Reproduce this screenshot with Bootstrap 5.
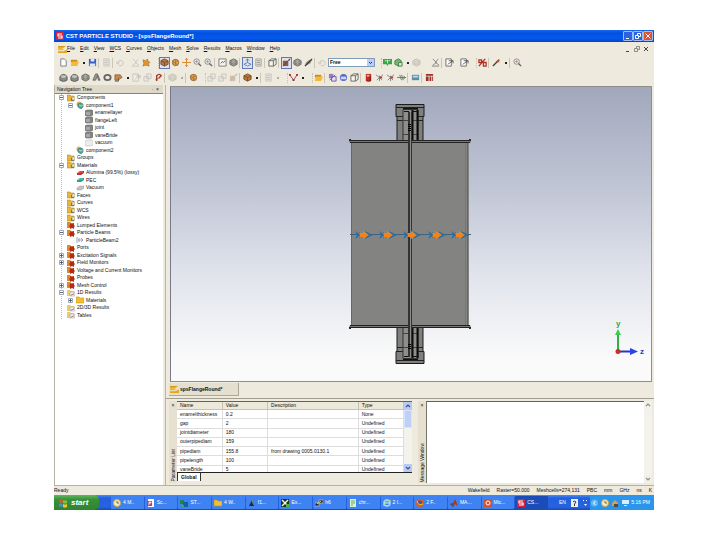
<!DOCTYPE html>
<html lang="en">
<head>
<meta charset="utf-8">
<meta name="viewport" content="width=device-width, initial-scale=1">
<title>CST PARTICLE STUDIO - [spsFlangeRound*]</title>
<link href="https://cdn.jsdelivr.net/npm/bootstrap@5.3.0/dist/css/bootstrap.min.css" rel="stylesheet">
<style>
:root{--face:#eeeadd;--edge:#aca899}
body{background:#fff;font-family:"Liberation Sans",Arial,sans-serif;font-size:5px;line-height:7px;color:#111;min-height:100vh;padding:30px 66px 30px 54px}
button{font:inherit;color:inherit;background:none;border:0;padding:0;line-height:7px}
svg{display:block;flex:none}
.app{background:var(--face)}
.titlebar{background:linear-gradient(#1668f0,#0450de 25%,#0558ee 70%,#0345c4);height:12px;color:#fff;font-size:6px;font-weight:700;padding:0 1px 0 2px}
.win-btn{width:10px;height:10px;border:1px solid #9dbdf8;border-radius:1px;background:#2a62e0}
.win-btn.quit{background:#d9502f}
.menubar{height:13px;padding:0 3px 0 4px}
.menubar a{color:#111;text-decoration:none}
.menubar a::first-letter{text-decoration:underline}
.menu-links{gap:5px}
.mdi button{width:9px}
.tools{height:15px;padding-left:4px}
.tools .tool{width:11px;height:12px;display:flex;align-items:center;justify-content:center;border:1px solid transparent;flex:none}
.tools .on{background:#dfe3ef;border-color:#6078b4}
.dim{opacity:.3}
.sep{width:3px;height:10px;border-left:1px solid #cbc6b4;margin:0;flex:none}
.grip{width:7px;height:10px;flex:none;border-right:1px dotted #c4bfae}
.space{width:4px;flex:none}
.drop{width:7px;flex:none;height:12px;display:flex;align-items:center;justify-content:center}
.drop::after{content:"";width:2px;height:2px;background:#222}
.render{width:47px;height:9px;flex:none;border:1px solid #7f9db9;padding:0 1px;font-size:5px;line-height:7px;font-weight:700;color:#111;background:#fff url("data:image/svg+xml,%3Csvg xmlns='http://www.w3.org/2000/svg' viewBox='0 0 7 7'%3E%3Crect width='7' height='7' fill='%23b9cdf8'/%3E%3Cpath d='M2 3l1.500 1.500L5 3' fill='none' stroke='%23234' /%3E%3C/svg%3E") right center/7px 7px no-repeat;appearance:none;border-radius:0}
.side{width:112px;border-left:1px solid #b8b4a4;border-right:1px solid #b8b4a4;padding-right:2px}
.side-head{height:8px;padding:0 4px 0 2px;background:#ded9c8}
.tree-box{background:#fff;border-top:1px solid #888474}
.tree{list-style:none;margin:0;padding:0 0 0 3px;height:225px;background:repeating-linear-gradient(#bbb 0 1px,#fff 1px 2px) 6px 0/1px 100% no-repeat}
.tree li{flex:1 1 0;min-height:0;gap:2px;white-space:nowrap}
.tree .lv1{padding-left:9px}.tree .lv2{padding-left:18px}
.knob{width:7px;height:7px;flex:none;display:flex;align-items:center;justify-content:center}
.stage{background:linear-gradient(#a2a8bc,#c1c6d6 35%,#dfe2eb 62%,#fafafa 92%);border:1px solid #8f8e8a;border-left-color:#77798a;margin:1px 2px 0 4px}
.axes{position:absolute;right:0;bottom:22px}
.file-tabs{height:16px;padding:1px 0 2px 3px}
.file-tab{height:13px;width:70px;padding:0 1px;gap:1px;font-weight:700;background:#e4dfce;border-right:1px solid var(--edge);border-bottom:1px solid var(--edge)}
.docks{height:87px;border-top:1px solid #a39f8f;padding:2px 2px 2px 3px}
.dock-strip{width:8px;padding:1px 0;flex:none;background:#e5e0d0}
.turned{writing-mode:vertical-rl;transform:rotate(180deg);white-space:nowrap;line-height:8px}
.params{width:243px;flex:none}
.message-dock{padding-left:6px}
.clip{height:72px;overflow:hidden;border-top:1px solid #666258;border-bottom:1px solid #222;background:#fff}
.ptable{width:100%;height:73px;table-layout:fixed;border-collapse:collapse;margin:0}
.ptable th,.ptable td{padding:0 0 0 3px;line-height:7px;font-weight:400;border-right:1px solid #ddd;border-bottom:1px solid #ddd;white-space:nowrap;overflow:hidden}
.ptable th{background:#ece8da;border-color:#c6c1b0}
.sbar{width:8px;flex:none;background:#f3f2ec}
.sbar i{display:block;width:8px;background:#bfd0f8;border:1px solid #d9e3fb}
.sbar svg{background:#b7caf7}
.sbar.off svg{background:#f1efe6;opacity:.6}
.sheet{padding:0 3px;font-weight:700;background:#fff;border-left:1px solid #333;border-right:1px solid #333;height:8px}
.messages{resize:none;border:0;border-top:1px solid #666258;border-left:1px solid #77746a;background:#fff;min-width:0;border-radius:0}
.status{height:10px;border-top:1px solid #b5b1a1;padding-right:2px}
.status .cells{gap:7px}
.taskbar{height:15px;background:linear-gradient(#4b8cf6,#2460dd 20%,#2663e2 80%,#1a48b4);color:#fff}
.start{width:45px;background:linear-gradient(#63b663,#379238 30%,#2e8530);border-radius:0 5px 5px 0;color:#fff;font-size:8px;font-style:italic;font-weight:700;gap:3px;padding-left:4px;margin-right:12px;flex:none}
.task{flex:1 1 0;min-width:0;gap:2px;padding-left:2px;margin:1px 1px 1px 0;background:#3f83f3;border-radius:1px;white-space:nowrap;overflow:hidden;color:#fff}
.task.current{background:#1c4cb8}
.lang{width:41px;padding:0 3px 0 10px;flex:none}
.tray{width:64px;background:#2a95ea;padding:0 4px 0 1px;flex:none}
</style>
<script src="https://cdn.jsdelivr.net/npm/bootstrap@5.3.0/dist/js/bootstrap.bundle.min.js"></script>
</head>
<body class="d-flex flex-column">
<svg width="0" height="0" class="position-absolute" aria-hidden="true">
<defs>
<symbol id="new" viewBox="0 0 10 10"><path d="M2 1h4l2 2v6H2z" fill="#fff" stroke="#777"/></symbol>
<symbol id="open" viewBox="0 0 10 10"><path d="M1 2h7v3H1z" fill="#c98c16"/><path d="M1 9l1-5h8L8 9z" fill="#f2ba38"/></symbol>
<symbol id="save" viewBox="0 0 10 10"><path d="M1 1h8v8H1z" fill="#3c5fc4"/><path d="M3 1h4v3H3zM2 6h6v3H2z" fill="#dfe7fb"/></symbol>
<symbol id="doc" viewBox="0 0 10 10"><path d="M2 1h6v8H2z" fill="#ddd" stroke="#777"/><path d="M3 3h4M3 5h4M3 7h4" stroke="#666"/></symbol>
<symbol id="copy" viewBox="0 0 10 10"><path d="M1 4h5v5H1zM4 1h5v5H4z" fill="#ddd" stroke="#777"/></symbol>
<symbol id="undo" viewBox="0 0 10 10"><path d="M2 5a3 3 0 1 1 1 3M0 4l2 3 2-3" fill="none" stroke="#666"/></symbol>
<symbol id="gearo" viewBox="0 0 10 10"><path d="M1 2l3 1 2-2 1 3 2 1-2 1 1 3-4-1-3 1 1-3z" fill="#e0952d" stroke="#8c6a3a" stroke-width=".6"/></symbol>
<symbol id="cube" viewBox="0 0 10 10"><path d="M1 3l4-2 4 2v4L5 9 1 7z" fill="#b8763c" stroke="#7a4a24"/><path d="M1 3l4 2 4-2M5 5v4" fill="none" stroke="#6b4020" stroke-width=".7"/></symbol>
<symbol id="orbit" viewBox="0 0 10 10"><circle cx="5" cy="5" r="3.500" fill="#e3a34a" stroke="#8b6338"/><path d="M1 3l7 5M5 2v6M2 6l6-3" stroke="#a5743c" stroke-width=".8"/></symbol>
<symbol id="pan" viewBox="0 0 10 10"><path d="M5 0v10M0 5h10M3.500 2L5 .5 6.500 2M3.500 8L5 9.500 6.500 8" fill="none" stroke="#d8842a"/></symbol>
<symbol id="zoom" viewBox="0 0 10 10"><circle cx="4" cy="4" r="3" fill="#eee" stroke="#888"/><path d="M2.500 4h3M4 2.500v3" stroke="#a77" stroke-width=".8"/><path d="M6 6l3 3" stroke="#666" stroke-width="1.500"/></symbol>
<symbol id="frame" viewBox="0 0 10 10"><path d="M1 1h8v8H1z" fill="#f4f4f0" stroke="#777"/><path d="M3 6l2-2 1 1 2-2" fill="none" stroke="#555"/></symbol>
<symbol id="mesh" viewBox="0 0 10 10"><path d="M1 3l4-2 4 2v4L5 9 1 7z" fill="#a9a69a" stroke="#666"/><path d="M1 5l4 2 4-2M3 2v6M7 2v6" fill="none" stroke="#666" stroke-width=".5"/></symbol>
<symbol id="axis" viewBox="0 0 10 10"><path d="M5 1v4L1 7l4 2 4-2-4-2M3 3l2-2 2 2" fill="none" stroke="#4a7aa4" stroke-width=".9"/></symbol>
<symbol id="wire" viewBox="0 0 10 10"><path d="M1 3h5v6H1zM1 3l3-2h5L6 3M9 1v6L6 9" fill="#f5f3ea" stroke="#555" stroke-width=".9"/></symbol>
<symbol id="cut" viewBox="0 0 10 10"><path d="M1 3h6v6H1z" fill="#9a5838"/><path d="M1 9L9 1M7 2l2-1-1 2" fill="none" stroke="#444" stroke-width=".8"/></symbol>
<symbol id="slash" viewBox="0 0 10 10"><path d="M1 9l1-4 4-3h3L7 6 3 8z" fill="#9b9388"/><path d="M1 9L9 1" stroke="#333" stroke-width="1.300"/></symbol>
<symbol id="green" viewBox="0 0 10 10"><path d="M0 1h10v6H6L5 9 4 7H0z" fill="#3aa545"/><path d="M5 2v4M2 3h2M6 3h2" stroke="#dff5df"/></symbol>
<symbol id="green2" viewBox="0 0 10 10"><path d="M1 3l4-2 3 2v4L5 9 1 7z" fill="#77b872" stroke="#3d7d42"/><path d="M5 5h4v4H5z" fill="#ceedca" stroke="#3d7d42"/></symbol>
<symbol id="sheet" viewBox="0 0 10 10"><path d="M1 1h6v8H1z" fill="#fff" stroke="#666"/><path d="M3 7l6-4M4 3h5v3" fill="none" stroke="#444" stroke-width=".8"/></symbol>
<symbol id="xplot" viewBox="0 0 10 10"><path d="M2 1l4 4-4 3M8 1L5 5l4 3M1 9h8" fill="none" stroke="#666" stroke-width=".8"/></symbol>
<symbol id="pct" viewBox="0 0 10 10"><path d="M1 9L8 1M1 2h3v3H1zM6 5h3v4H6z" fill="none" stroke="#b22e20" stroke-width="1.400"/></symbol>
<symbol id="pen" viewBox="0 0 10 10"><path d="M1 9L8 2" stroke="#444" stroke-width="1.500"/><path d="M4 4l4-3v4z" fill="#c75032"/></symbol>
<symbol id="ball" viewBox="0 0 10 10"><path d="M1 4q4-5 8 0v4q-4 3-8 0z" fill="#8a8a86" stroke="#5f5f5d"/><ellipse cx="5" cy="4" rx="3" ry="1.500" fill="#c5c5c0"/></symbol>
<symbol id="cone" viewBox="0 0 10 10"><path d="M4 1L1 8h3l2-5 1 5h2L6 1z" fill="#9a9a95" stroke="#555" stroke-width=".8"/></symbol>
<symbol id="torus" viewBox="0 0 10 10"><ellipse cx="5" cy="5" rx="3.500" ry="3" fill="none" stroke="#666" stroke-width="2"/></symbol>
<symbol id="extr" viewBox="0 0 10 10"><path d="M1 2h6l2 3-5 3H1z" fill="#c88843" stroke="#85603a" stroke-width=".8"/><path d="M1 9h4V6" stroke="#555" fill="none"/></symbol>
<symbol id="hook" viewBox="0 0 10 10"><path d="M3 9V3q3-3 5 0L5 6M2 8l2-2" fill="none" stroke="#a13528" stroke-width="1.500"/></symbol>
<symbol id="vee" viewBox="0 0 10 10"><path d="M1 2l4 6 4-6" fill="none" stroke="#a3384c"/><path d="M0 1h2v2H0zM4 7h2v2H4zM8 1h2v2H8z" fill="#8b2a3c"/></symbol>
<symbol id="grid" viewBox="0 0 10 10"><path d="M1 1h5v5H1z" fill="#9a7cc4"/><path d="M4 4h5v5H4z" fill="#e8dcf5" stroke="#6b52a0"/><path d="M2 8l6-6" stroke="#b14a6a"/></symbol>
<symbol id="globe" viewBox="0 0 10 10"><circle cx="5" cy="5" r="4" fill="#5568c4"/><path d="M2 4h6v3H2z" fill="#cdd5fa"/></symbol>
<symbol id="red" viewBox="0 0 10 10"><path d="M2 1h6v8H2z" fill="#c22c22"/><path d="M3 2h3v2H3z" fill="#f3a48e"/><path d="M7 4v5H3" stroke="#6b1812" fill="none"/></symbol>
<symbol id="spark" viewBox="0 0 10 10"><path d="M1 2l4 3 4-3M2 8l3-3 3 3M5 3v6" fill="none" stroke="#78828c"/><path d="M5 4h3v2H5z" fill="#c03a34"/></symbol>
<symbol id="wave" viewBox="0 0 10 10"><path d="M0 5h10M3 2l2 6M5 2l2 6M7 3l2 2-2 2" fill="none" stroke="#586e5d" stroke-width=".9"/></symbol>
<symbol id="screen" viewBox="0 0 10 10"><path d="M1 2h8v6H1z" fill="#5d8dab"/><path d="M2 3h6v2H2z" fill="#b5dbe8"/></symbol>
<symbol id="tower" viewBox="0 0 10 10"><path d="M1 1h8v2H1zM1 4h3v5H1zM5 4h2v5H5zM8 4h1v5H8z" fill="#9c2f2a"/></symbol>
<symbol id="plus" viewBox="0 0 5 5"><path d="M.5.5h4v4h-4z" fill="#fff" stroke="#9aa9bd"/><path d="M1 2.500h3M2.500 1v3" stroke="#444" stroke-width=".8"/></symbol>
<symbol id="minus" viewBox="0 0 5 5"><path d="M.5.5h4v4h-4z" fill="#fff" stroke="#9aa9bd"/><path d="M1 2.500h3" stroke="#444" stroke-width=".8"/></symbol>
<symbol id="fold" viewBox="0 0 8 8"><path d="M0 1h3l1 1h3v5H0z" fill="#e9b53c" stroke="#b07c18" stroke-width=".5"/><path d="M4 4h3v3H4z" fill="#7b7a62"/><path d="M5 3h3v3H5z" fill="#f3e9b4" stroke="#777" stroke-width=".4"/></symbol>
<symbol id="foldr" viewBox="0 0 8 8"><path d="M0 1h3l1 1h3v5H0z" fill="#d98a2a"/><path d="M3 2l2 1 2-1v2l1 1-1 1v2L5 7 3 8V6L2 5l1-1z" fill="#b82a18"/></symbol>
<symbol id="foldp" viewBox="0 0 8 8"><path d="M0 1h3l1 1h3v5H0z" fill="#eecb6a"/><path d="M3 3h5v4H3z" fill="#eee" stroke="#999" stroke-width=".5"/><path d="M4 7l1-2 1 1 1-2" stroke="#a55" fill="none" stroke-width=".6"/></symbol>
<symbol id="foldy" viewBox="0 0 8 8"><path d="M0 1h3l1 1h4v5H0z" fill="#f0c030" stroke="#c08c10" stroke-width=".5"/></symbol>
<symbol id="comp" viewBox="0 0 8 8"><circle cx="3" cy="3" r="2.500" fill="#e0b050"/><path d="M2 3l3-1 2 1v3L5 8 2 6z" fill="#54a39a" stroke="#2d6f73" stroke-width=".6"/><path d="M3 4l2 1 2-1" stroke="#dff" fill="none" stroke-width=".6"/></symbol>
<symbol id="solid" viewBox="0 0 8 8"><path d="M0 2l2-1h5l1 1v4L6 7H1L0 6z" fill="#858585" stroke="#666" stroke-width=".6"/><path d="M1 3h4v3H1z" fill="#a6a6a6"/></symbol>
<symbol id="ghost" viewBox="0 0 8 8"><path d="M0 2l2-1h5l1 1v4L6 7H1L0 6z" fill="#ededed" stroke="#bbb" stroke-width=".6"/></symbol>
<symbol id="matr" viewBox="0 0 8 8"><path d="M1 4l3-2h4v2L5 6H1z" fill="#c8282c"/><path d="M2 4l2-1h3" stroke="#f19a96" fill="none" stroke-width=".6"/></symbol>
<symbol id="matt" viewBox="0 0 8 8"><path d="M1 4l3-2h4v2L5 6H1z" fill="#26a08e"/><path d="M2 4l2-1h3" stroke="#aee6dc" fill="none" stroke-width=".6"/></symbol>
<symbol id="matg" viewBox="0 0 8 8"><path d="M1 4l3-2h4v2L5 6H1z" fill="#c3c3c3" stroke="#999" stroke-width=".5"/></symbol>
<symbol id="beam" viewBox="0 0 8 8"><path d="M1 1v6M3 2v4M2 4h5M5 2l2 2-2 2" fill="none" stroke="#7d93ad" stroke-width=".8"/></symbol>
<symbol id="cst" viewBox="0 0 10 9"><path d="M0 1h9L6 3H0z" fill="#d39a17"/><path d="M0 3h4l3 2-3 1H0z" fill="#f3b92c"/><path d="M0 7h6l4-2v4H0z" fill="#e5a51c"/></symbol>
<symbol id="cstred" viewBox="0 0 8 8"><path d="M0 0h8v8H0z" fill="#d4233a"/><path d="M6 2H2v2h4v2H2" fill="none" stroke="#fff" stroke-width="1.200"/></symbol>
<symbol id="up" viewBox="0 0 8 8"><path d="M2 5l2-2 2 2" fill="none" stroke="#456" stroke-width="1.200"/></symbol>
<symbol id="down" viewBox="0 0 8 8"><path d="M2 3l2 2 2-2" fill="none" stroke="#456" stroke-width="1.200"/></symbol>
<symbol id="flag" viewBox="0 0 10 10"><path d="M1 2q2-1 3.500 0v3Q3 4 1 5z" fill="#e5532d"/><path d="M5 2q2 1 4 0v3q-2 1-4 0z" fill="#7cc142"/><path d="M1 6q2-1 3.500 0v3Q3 8 1 9z" fill="#4a8ae8"/><path d="M5 6q2 1 4 0v3q-2 1-4 0z" fill="#f5c431"/></symbol>
<symbol id="clock" viewBox="0 0 8 8"><circle cx="4" cy="4" r="3.500" fill="#f4e9c8" stroke="#e2a63a"/><path d="M4 2v2h2" stroke="#666" fill="none"/></symbol>
<symbol id="ppt" viewBox="0 0 8 8"><path d="M1 0h6v8H1z" fill="#fff"/><path d="M0 2h5v5H0z" fill="#b83c78"/><path d="M2 6V3h2v1H2" fill="none" stroke="#fff" stroke-width=".8"/></symbol>
<symbol id="st" viewBox="0 0 8 8"><path d="M0 1h4v4H0z" fill="#1f8746"/><path d="M3 3h5v5H3z" fill="#1b5e9e"/><path d="M1 6h3v2H1z" fill="#2dad5a"/></symbol>
<symbol id="dark" viewBox="0 0 8 8"><path d="M1 7l3-6 1 3 2 3z" fill="#162a4e"/><path d="M4 1l1 4 2 2" stroke="#c9a33e" fill="none" stroke-width=".6"/></symbol>
<symbol id="xceed" viewBox="0 0 8 8"><path d="M0 0h8v8H0z" fill="#163818"/><path d="M1 1l6 6M7 1L1 7" stroke="#eee" stroke-width="1.500"/><path d="M5 5h3v3H5z" fill="#52b040"/></symbol>
<symbol id="putty" viewBox="0 0 8 8"><path d="M0 4h4v3H0zM4 1h4v3H4z" fill="#222" stroke="#ccc" stroke-width=".6"/><path d="M2 5l4-3" stroke="#f2d632"/></symbol>
<symbol id="note" viewBox="0 0 8 8"><path d="M1 0h6v8H1z" fill="#def1cf"/><path d="M2 2h4M2 4h4M2 6h2" stroke="#49984b" stroke-width=".8"/></symbol>
<symbol id="ie" viewBox="0 0 8 8"><circle cx="4" cy="4" r="3" fill="none" stroke="#9be2fb" stroke-width="1.500"/><path d="M1 4h6" stroke="#d2f3ff"/><path d="M0 7Q3 1 8 1" stroke="#e7c64d" fill="none" stroke-width=".8"/></symbol>
<symbol id="fox" viewBox="0 0 8 8"><circle cx="4" cy="4" r="4" fill="#d8601a"/><circle cx="4" cy="3.500" r="2" fill="#3a58a8"/><path d="M1 2q1 5 6 3" stroke="#f5b537" fill="none"/></symbol>
<symbol id="matlab" viewBox="0 0 8 8"><path d="M0 5l3-1 2-4 3 7-3-2-2 3z" fill="#b5361a"/><path d="M0 5l3-1 1 2-1 2z" fill="#39577f"/></symbol>
</defs>
</svg>

<main class="app d-flex flex-column flex-grow-1">
  <header class="titlebar d-flex align-items-center">
    <svg width="8" height="8"><use href="#cstred"/></svg>
    <span class="me-auto text-nowrap">&nbsp;CST PARTICLE STUDIO - [spsFlangeRound*]</span>
    <button class="win-btn" aria-label="Minimize"><svg width="8" height="8"><path d="M2 6.500h3" stroke="#fff"/></svg></button>
    <button class="win-btn" aria-label="Restore"><svg width="8" height="8"><path d="M3.500 3V1.500h3v3H5M1.500 3.500h3v3h-3z" fill="none" stroke="#fff"/></svg></button>
    <button class="win-btn quit" aria-label="Close"><svg width="8" height="8"><path d="M1.500 1.500l5 5M6.500 1.500l-5 5" stroke="#fff"/></svg></button>
  </header>

  <nav class="menubar d-flex align-items-center" aria-label="Main menu">
    <svg width="9" height="8"><use href="#cst"/></svg>
    <div class="menu-links d-flex me-auto">
      <a class="d-block" href="#">File</a><a class="d-block" href="#">Edit</a><a class="d-block" href="#">View</a><a class="d-block" href="#">WCS</a><a class="d-block" href="#">Curves</a><a class="d-block" href="#">Objects</a><a class="d-block" href="#">Mesh</a><a class="d-block" href="#">Solve</a><a class="d-block" href="#">Results</a><a class="d-block" href="#">Macros</a><a class="d-block" href="#">Window</a><a class="d-block" href="#">Help</a>
    </div>
    <div class="mdi d-flex">
      <button aria-label="Minimize document"><svg width="8" height="8"><path d="M2 6.500h3" stroke="#444"/></svg></button>
      <button aria-label="Restore document"><svg width="8" height="8"><path d="M3.500 3V1.500h3v3H5M1.500 3.500h3v3h-3z" fill="none" stroke="#777" stroke-width=".8"/></svg></button>
      <button aria-label="Close document"><svg width="8" height="8"><path d="M2 2l4 4M6 2L2 6" stroke="#444"/></svg></button>
    </div>
  </nav>

  <div class="tools d-flex align-items-center" role="toolbar" aria-label="Standard">
    <button class="tool" aria-label="New"><svg width="9" height="9"><use href="#new"/></svg></button>
    <button class="tool" aria-label="Open"><svg width="9" height="9"><use href="#open"/></svg></button>
    <button class="drop" aria-label="Recent files"></button>
    <button class="tool" aria-label="Save"><svg width="9" height="9"><use href="#save"/></svg></button>
    <span class="sep"></span>
    <button class="tool dim" aria-label="Print"><svg width="9" height="9"><use href="#doc"/></svg></button>
    <span class="sep"></span>
    <button class="tool dim" aria-label="Undo"><svg width="9" height="9"><use href="#undo"/></svg></button>
    <span class="space"></span>
    <button class="tool dim" aria-label="History"><svg width="9" height="9"><use href="#xplot"/></svg></button>
    <button class="tool" aria-label="Update"><svg width="9" height="9"><use href="#gearo"/></svg></button>
    <span class="grip"></span>
    <button class="tool on" aria-label="Rotate"><svg width="9" height="9"><use href="#cube"/></svg></button>
    <button class="tool" aria-label="Rotate in plane"><svg width="9" height="9"><use href="#orbit"/></svg></button>
    <button class="tool" aria-label="Pan"><svg width="9" height="9"><use href="#pan"/></svg></button>
    <button class="tool" aria-label="Zoom"><svg width="9" height="9"><use href="#zoom"/></svg></button>
    <button class="tool" aria-label="Zoom dynamically"><svg width="9" height="9"><use href="#zoom"/></svg></button>
    <span class="sep"></span>
    <button class="tool" aria-label="Reset view"><svg width="9" height="9"><use href="#frame"/></svg></button>
    <button class="tool" aria-label="Reset to structure"><svg width="9" height="9"><use href="#mesh"/></svg></button>
    <span class="sep"></span>
    <button class="tool on" aria-label="Axes"><svg width="9" height="9"><use href="#axis"/></svg></button>
    <button class="tool" aria-label="Working plane"><svg width="9" height="9" opacity=".6"><use href="#doc"/></svg></button>
    <span class="sep"></span>
    <button class="tool" aria-label="Bounding box"><svg width="9" height="9"><use href="#wire"/></svg></button>
    <span class="sep"></span>
    <button class="tool on" aria-label="Cutting plane"><svg width="9" height="9"><use href="#cut"/></svg></button>
    <button class="tool" aria-label="Mesh view"><svg width="9" height="9"><use href="#mesh"/></svg></button>
    <button class="tool" aria-label="Wireframe"><svg width="9" height="9"><use href="#slash"/></svg></button>
    <span class="sep"></span>
    <button class="tool dim" aria-label="Material"><svg width="9" height="9"><use href="#undo"/></svg></button>
    <select class="render" aria-label="View mode"><option>Free</option></select>
    <span class="grip"></span>
    <button class="tool" aria-label="Mesh properties"><svg width="9" height="9"><use href="#green"/></svg></button>
    <button class="tool" aria-label="Mesh type"><svg width="9" height="9"><use href="#green2"/></svg></button>
    <button class="drop" aria-label="Mesh menu"></button>
    <button class="tool dim" aria-label="Mesh update"><svg width="9" height="9"><use href="#mesh"/></svg></button>
    <span class="space"></span><span class="space"></span>
    <button class="tool" aria-label="Plot"><svg width="9" height="9"><use href="#xplot"/></svg></button>
    <span class="sep"></span>
    <button class="tool" aria-label="Report"><svg width="9" height="9"><use href="#sheet"/></svg></button>
    <span class="space"></span>
    <button class="tool" aria-label="Export"><svg width="9" height="9"><use href="#sheet"/></svg></button>
    <span class="grip"></span>
    <button class="tool" aria-label="Parameter sweep"><svg width="9" height="9"><use href="#pct"/></svg></button>
    <span class="sep"></span>
    <button class="tool" aria-label="Curve"><svg width="9" height="9"><use href="#pen"/></svg></button>
    <button class="drop" aria-label="Curve menu"></button>
    <span class="sep"></span>
    <button class="tool" aria-label="Inspect"><svg width="9" height="9"><use href="#zoom"/></svg></button>
  </div>

  <div class="tools d-flex align-items-center" role="toolbar" aria-label="Modeling">
    <button class="tool" aria-label="Brick"><svg width="9" height="9"><use href="#ball"/></svg></button>
    <button class="tool" aria-label="Sphere"><svg width="9" height="9"><use href="#ball"/></svg></button>
    <button class="tool" aria-label="Cylinder"><svg width="9" height="9"><use href="#mesh"/></svg></button>
    <button class="tool" aria-label="Cone"><svg width="9" height="9"><use href="#cone"/></svg></button>
    <button class="tool" aria-label="Torus"><svg width="9" height="9"><use href="#torus"/></svg></button>
    <button class="tool" aria-label="Extrude"><svg width="9" height="9"><use href="#extr"/></svg></button>
    <button class="drop" aria-label="Extrude menu"></button>
    <button class="tool dim" aria-label="Loft"><svg width="9" height="9"><use href="#sheet"/></svg></button>
    <button class="tool dim" aria-label="Transform"><svg width="9" height="9"><use href="#copy"/></svg></button>
    <button class="tool" aria-label="Pick"><svg width="9" height="9"><use href="#hook"/></svg></button>
    <span class="sep"></span>
    <button class="tool dim" aria-label="Boolean"><svg width="9" height="9"><use href="#mesh"/></svg></button>
    <button class="drop dim" aria-label="Boolean menu"></button>
    <span class="sep"></span>
    <button class="tool" aria-label="Edit solid"><svg width="9" height="9"><use href="#orbit"/></svg></button>
    <span class="grip"></span>
    <button class="tool dim" aria-label="Align"><svg width="9" height="9"><use href="#copy"/></svg></button>
    <button class="tool dim" aria-label="Rotate plane"><svg width="9" height="9"><use href="#copy"/></svg></button>
    <button class="tool dim" aria-label="Move plane"><svg width="9" height="9"><use href="#cut"/></svg></button>
    <span class="sep"></span>
    <button class="tool" aria-label="Object"><svg width="9" height="9"><use href="#cube"/></svg></button>
    <button class="drop" aria-label="Object menu"></button>
    <span class="sep"></span>
    <button class="tool dim" aria-label="Grid"><svg width="9" height="9"><use href="#doc"/></svg></button>
    <button class="drop dim" aria-label="Grid menu"></button>
    <span class="grip"></span>
    <button class="tool" aria-label="Polygon"><svg width="9" height="9"><use href="#vee"/></svg></button>
    <button class="drop" aria-label="Polygon menu"></button>
    <span class="grip"></span>
    <button class="tool" aria-label="Import"><svg width="9" height="9"><use href="#open"/></svg></button>
    <span class="sep"></span>
    <button class="tool" aria-label="Frequency"><svg width="9" height="9"><use href="#grid"/></svg></button>
    <button class="tool" aria-label="Background"><svg width="9" height="9"><use href="#globe"/></svg></button>
    <button class="tool" aria-label="Boundaries"><svg width="9" height="9"><use href="#wire"/></svg></button>
    <span class="sep"></span>
    <button class="tool" aria-label="Port"><svg width="9" height="9"><use href="#red"/></svg></button>
    <button class="tool" aria-label="Source"><svg width="9" height="9"><use href="#spark"/></svg></button>
    <button class="tool" aria-label="Monitor"><svg width="9" height="9"><use href="#spark"/></svg></button>
    <button class="tool" aria-label="Beam"><svg width="9" height="9"><use href="#wave"/></svg></button>
    <span class="sep"></span>
    <button class="tool" aria-label="Probe"><svg width="9" height="9"><use href="#screen"/></svg></button>
    <span class="sep"></span>
    <button class="tool" aria-label="Solver"><svg width="9" height="9"><use href="#tower"/></svg></button>
  </div>

  <div class="d-flex flex-grow-1">
    <aside class="side d-flex flex-column flex-shrink-0">
      <div class="side-head d-flex align-items-center justify-content-between">
        <span>Navigation Tree</span><span><button aria-label="Pin">·</button>&nbsp;&nbsp;<button aria-label="Close panel">×</button></span>
      </div>
      <div class="tree-box flex-grow-1">
        <ul class="tree d-flex flex-column">
          <li class="d-flex align-items-center"><button class="knob" aria-label="Collapse"><svg width="5" height="5"><use href="#minus"/></svg></button><svg width="8" height="8"><use href="#fold"/></svg>Components</li>
          <li class="d-flex align-items-center lv1"><button class="knob" aria-label="Collapse"><svg width="5" height="5"><use href="#minus"/></svg></button><svg width="8" height="8"><use href="#comp"/></svg>component1</li>
          <li class="d-flex align-items-center lv2"><span class="knob"></span><svg width="8" height="8"><use href="#solid"/></svg>enamellayer</li>
          <li class="d-flex align-items-center lv2"><span class="knob"></span><svg width="8" height="8"><use href="#solid"/></svg>flangeLeft</li>
          <li class="d-flex align-items-center lv2"><span class="knob"></span><svg width="8" height="8"><use href="#solid"/></svg>joint</li>
          <li class="d-flex align-items-center lv2"><span class="knob"></span><svg width="8" height="8"><use href="#solid"/></svg>vaneBride</li>
          <li class="d-flex align-items-center lv2"><span class="knob"></span><svg width="8" height="8"><use href="#ghost"/></svg>vacuum</li>
          <li class="d-flex align-items-center lv1"><span class="knob"></span><svg width="8" height="8"><use href="#comp"/></svg>component2</li>
          <li class="d-flex align-items-center"><span class="knob"></span><svg width="8" height="8"><use href="#fold"/></svg>Groups</li>
          <li class="d-flex align-items-center"><button class="knob" aria-label="Collapse"><svg width="5" height="5"><use href="#minus"/></svg></button><svg width="8" height="8"><use href="#fold"/></svg>Materials</li>
          <li class="d-flex align-items-center lv1"><span class="knob"></span><svg width="8" height="8"><use href="#matr"/></svg>Alumina (99.5%) (lossy)</li>
          <li class="d-flex align-items-center lv1"><span class="knob"></span><svg width="8" height="8"><use href="#matt"/></svg>PEC</li>
          <li class="d-flex align-items-center lv1"><span class="knob"></span><svg width="8" height="8"><use href="#matg"/></svg>Vacuum</li>
          <li class="d-flex align-items-center"><span class="knob"></span><svg width="8" height="8"><use href="#fold"/></svg>Faces</li>
          <li class="d-flex align-items-center"><span class="knob"></span><svg width="8" height="8"><use href="#fold"/></svg>Curves</li>
          <li class="d-flex align-items-center"><span class="knob"></span><svg width="8" height="8"><use href="#fold"/></svg>WCS</li>
          <li class="d-flex align-items-center"><span class="knob"></span><svg width="8" height="8"><use href="#fold"/></svg>Wires</li>
          <li class="d-flex align-items-center"><span class="knob"></span><svg width="8" height="8"><use href="#foldr"/></svg>Lumped Elements</li>
          <li class="d-flex align-items-center"><button class="knob" aria-label="Collapse"><svg width="5" height="5"><use href="#minus"/></svg></button><svg width="8" height="8"><use href="#foldr"/></svg>Particle Beams</li>
          <li class="d-flex align-items-center lv1"><span class="knob"></span><svg width="8" height="8"><use href="#beam"/></svg>ParticleBeam2</li>
          <li class="d-flex align-items-center"><span class="knob"></span><svg width="8" height="8"><use href="#foldr"/></svg>Ports</li>
          <li class="d-flex align-items-center"><button class="knob" aria-label="Expand"><svg width="5" height="5"><use href="#plus"/></svg></button><svg width="8" height="8"><use href="#foldr"/></svg>Excitation Signals</li>
          <li class="d-flex align-items-center"><button class="knob" aria-label="Expand"><svg width="5" height="5"><use href="#plus"/></svg></button><svg width="8" height="8"><use href="#foldr"/></svg>Field Monitors</li>
          <li class="d-flex align-items-center"><span class="knob"></span><svg width="8" height="8"><use href="#foldr"/></svg>Voltage and Current Monitors</li>
          <li class="d-flex align-items-center"><span class="knob"></span><svg width="8" height="8"><use href="#foldr"/></svg>Probes</li>
          <li class="d-flex align-items-center"><button class="knob" aria-label="Expand"><svg width="5" height="5"><use href="#plus"/></svg></button><svg width="8" height="8"><use href="#foldr"/></svg>Mesh Control</li>
          <li class="d-flex align-items-center"><button class="knob" aria-label="Collapse"><svg width="5" height="5"><use href="#minus"/></svg></button><svg width="8" height="8"><use href="#foldp"/></svg>1D Results</li>
          <li class="d-flex align-items-center lv1"><button class="knob" aria-label="Expand"><svg width="5" height="5"><use href="#plus"/></svg></button><svg width="8" height="8"><use href="#foldy"/></svg>Materials</li>
          <li class="d-flex align-items-center"><span class="knob"></span><svg width="8" height="8"><use href="#foldp"/></svg>2D/3D Results</li>
          <li class="d-flex align-items-center"><span class="knob"></span><svg width="8" height="8"><use href="#foldp"/></svg>Tables</li>
        </ul>
      </div>
    </aside>

    <div class="d-flex flex-column flex-grow-1">
      <section class="stage position-relative d-flex align-items-center justify-content-center flex-grow-1" aria-label="Model view">
        <svg width="124" height="260" viewBox="0 0 124 260">
          <path d="M2 37h118v187H2z" fill="#838381"/>
          <path d="M2.500 37v187M118.500 37v187" stroke="#666" fill="none"/><path d="M116.500 39v184" stroke="#777"/>
          <g id="cap">
            <path d="M47 .5h28v12h-1v24H48v-24h-1z" fill="#7f7f7d" stroke="#1b1b1b"/>
            <path d="M47 3.500h28M48 12.500h6M69 12.500h6M48 16.500h6M69 16.500h5" stroke="#222"/>
            <path d="M54 36V5.500h15V36" fill="#8e8e8b" stroke="#333"/>
            <path d="M54 4.500h15" stroke="#111"/>
            <path d="M54 16.500h6M54 30.500h6M64 16.500h4M64 30.500h4" stroke="#444"/>
            <path d="M68.500 6v30M63.500 6v30" stroke="#0b0b0b" stroke-width="2"/>
            <path d="M55 7.500h5M64 7.500h5" stroke="#111"/>
            <path d="M0 36.500h122M2 38.500h118" stroke="#222"/><path d="M0 35h2v4H1z" fill="#222"/><path d="M122 35h-2v4h1z" fill="#222"/><path d="M1 37.500h120" stroke="#777"/>
          </g>
          <use href="#cap" transform="matrix(1 0 0 -1 0 261)" y="1"/>
          <path d="M61 8v245" stroke="#333" stroke-width="4"/>
          <path d="M61.500 8v245" stroke="#8b8b88"/>
          <path d="M60.500 20v8M60.500 240v5" stroke="#000" stroke-width="3" stroke-dasharray="1 1"/>
          <path d="M1 130.500h121" stroke="#40637d"/>
          <defs><g id="arr"><path d="M-8-4l6 4-6 4 2-4zM2-4l8 4-8 4 2-4zM-4-3l4 3-4 3z" fill="#276eaa"/><path d="M-4-2l4 0V-4L6 0 0 4V2h-4l1-2z" fill="#f18417"/></g></defs>
          <use href="#arr" x="14" y="131"/><use href="#arr" x="38" y="131"/><use href="#arr" x="62" y="131"/><use href="#arr" x="87" y="131"/><use href="#arr" x="110" y="131"/>
        </svg>
        <svg class="axes" width="38" height="40" viewBox="0 0 38 40" font-size="8" font-weight="700" font-family="Liberation Sans, Arial, sans-serif">
          <path d="M5 31V14" stroke="#2fb33c" stroke-width="2"/><path d="M2 16l3-6 3 6z" fill="#3ecb4a"/>
          <path d="M5 32.500h13" stroke="#2438c8" stroke-width="2"/><path d="M17 29l8 3.500-8 3.500z" fill="#2b42e6"/>
          <circle cx="5" cy="32.500" r="2.500" fill="#c83020"/>
          <text x="3" y="7" fill="#2fa83c">y</text><text x="27" y="35" fill="#2438c8">z</text>
        </svg>
      </section>

      <div class="file-tabs d-flex">
        <button class="file-tab d-flex align-items-center"><svg width="9" height="8"><use href="#cst"/></svg>spsFlangeRound*</button>
      </div>

      <div class="docks d-flex">
        <section class="params d-flex" aria-label="Parameter List">
          <div class="dock-strip d-flex flex-column align-items-center justify-content-between"><button aria-label="Close parameter list">×</button><span class="turned">Parameter List</span></div>
          <div class="flex-grow-1">
            <div class="clip d-flex">
              <div class="flex-grow-1">
                <table class="ptable">
                  <colgroup><col style="width:20%"><col style="width:20%"><col style="width:40%"><col style="width:20%"></colgroup>
                  <thead><tr><th>Name</th><th>Value</th><th>Description</th><th>Type</th></tr></thead>
                  <tbody>
                    <tr><td>enamelthickness</td><td>0.2</td><td></td><td>None</td></tr>
                    <tr><td>gap</td><td>2</td><td></td><td>Undefined</td></tr>
                    <tr><td>jointdiameter</td><td>180</td><td></td><td>Undefined</td></tr>
                    <tr><td>outerpipediam</td><td>159</td><td></td><td>Undefined</td></tr>
                    <tr><td>pipediam</td><td>155.8</td><td>from drawing 0005.0130.1</td><td>Undefined</td></tr>
                    <tr><td>pipelength</td><td>100</td><td></td><td>Undefined</td></tr>
                    <tr><td>vaneBride</td><td>5</td><td></td><td>Undefined</td></tr>
                  </tbody>
                </table>
              </div>
              <div class="sbar d-flex flex-column"><svg width="8" height="8"><use href="#up"/></svg><i class="flex-shrink-0 h-25"></i><svg class="mt-auto" width="8" height="8"><use href="#down"/></svg></div>
            </div>
            <div class="d-flex"><button class="sheet">Global</button></div>
          </div>
        </section>
        <section class="message-dock d-flex flex-grow-1" aria-label="Message Window">
          <div class="dock-strip d-flex flex-column align-items-center justify-content-between"><button aria-label="Close message window">×</button><span class="turned">Message Window</span></div>
          <textarea class="messages flex-grow-1" aria-label="Messages" readonly></textarea>
          <div class="sbar off d-flex flex-column justify-content-between"><svg width="8" height="8"><use href="#up"/></svg><svg width="8" height="8"><use href="#down"/></svg></div>
        </section>
      </div>
    </div>
  </div>

  <div class="status d-flex align-items-center justify-content-between">
    <span>Ready</span>
    <div class="cells d-flex"><span>Wakefield</span><span>Raster=50.000</span><span>Meshcells=274,131</span><span>PBC</span><span>mm</span><span>GHz</span><span>ns</span><span>K</span></div>
  </div>

  <footer class="taskbar d-flex">
    <button class="start d-flex align-items-center"><svg width="10" height="10"><use href="#flag"/></svg>start</button>
    <button class="task d-flex align-items-center"><svg width="8" height="8"><use href="#clock"/></svg>4 M..</button>
    <button class="task d-flex align-items-center"><svg width="8" height="8"><use href="#ppt"/></svg>Sc...</button>
    <button class="task d-flex align-items-center"><svg width="8" height="8"><use href="#st"/></svg>ST...</button>
    <button class="task d-flex align-items-center"><svg width="8" height="8"><use href="#foldy"/></svg>4 W..</button>
    <button class="task d-flex align-items-center"><svg width="8" height="8"><use href="#dark"/></svg>f1...</button>
    <button class="task d-flex align-items-center"><svg width="8" height="8"><use href="#xceed"/></svg>Ex...</button>
    <button class="task d-flex align-items-center"><svg width="8" height="8"><use href="#putty"/></svg>h6</button>
    <button class="task d-flex align-items-center"><svg width="8" height="8"><use href="#note"/></svg>chr...</button>
    <button class="task d-flex align-items-center"><svg width="8" height="8"><use href="#ie"/></svg>2 I...</button>
    <button class="task d-flex align-items-center"><svg width="8" height="8"><use href="#fox"/></svg>2 F..</button>
    <button class="task d-flex align-items-center"><svg width="8" height="8"><use href="#matlab"/></svg>MA...</button>
    <button class="task d-flex align-items-center"><svg width="8" height="8"><path d="M0 0h8v8H0z" fill="#d5502e"/><circle cx="4" cy="4" r="2" fill="none" stroke="#fff"/></svg>Mic...</button>
    <button class="task current d-flex align-items-center"><svg width="8" height="8"><use href="#cstred"/></svg>CS...</button>
    <div class="lang d-flex align-items-center justify-content-between"><span>EN</span><svg width="7" height="8"><path d="M0 0h7v8H0z" fill="#eee"/><path d="M2 3q1-2 3 0L3.500 5v2" stroke="#333" fill="none"/></svg><svg width="4" height="8"><path d="M0 1h1v1H0zM3 1h1v1H3zM1 5h3L2.500 7z" fill="#fff"/></svg></div>
    <div class="tray d-flex align-items-center justify-content-between">
      <svg width="7" height="8"><circle cx="3.500" cy="4" r="3.500" fill="#60b8f8"/><path d="M4.500 2L2.500 4l2 2" stroke="#fff" fill="none"/></svg>
      <svg width="8" height="8"><use href="#clock"/></svg>
      <svg width="8" height="8"><path d="M1 7V4l3-3 3 3v3z" fill="#c9a45a"/><path d="M3 5h4v3H3z" fill="#5c4b32"/></svg>
      <svg width="7" height="8"><path d="M0 1h7v4H0zM2 6h3v1H2z" fill="#d9ecfb"/></svg>
      <span class="text-nowrap">5:16 PM</span>
    </div>
  </footer>
</main>
</body>
</html>
